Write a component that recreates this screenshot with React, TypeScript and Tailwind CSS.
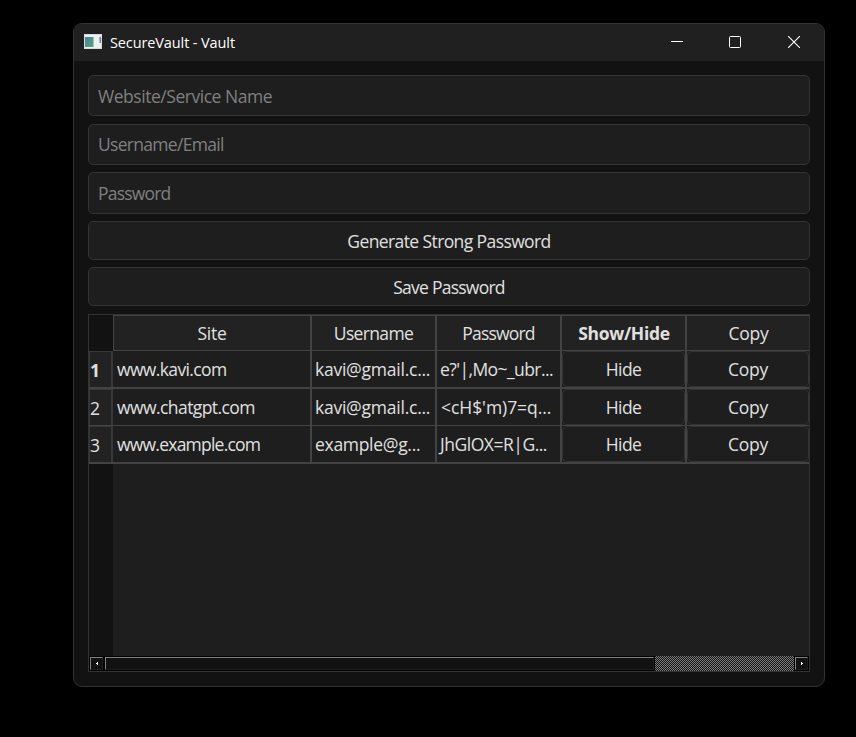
import type { ReactNode } from "react";

const rows = [
  {
    n: "1",
    site: "www.kavi.com",
    siteClass: "tracking-[-0.63px]",
    user: "kavi@gmail.c...",
    userClass: "tracking-[-0.24px]",
    pass: "e?'|,Mo~_ubr...",
    passClass: "pl-[3px] tracking-[-0.58px]",
    line: "border-b-2 h-[38px]",
  },
  {
    n: "2",
    site: "www.chatgpt.com",
    siteClass: "tracking-[-0.57px]",
    user: "kavi@gmail.c...",
    userClass: "tracking-[-0.24px]",
    pass: "<cH$'m)7=q...",
    passClass: "pl-[4px] tracking-[-0.05px]",
    line: "border-b h-[37px]",
  },
  {
    n: "3",
    site: "www.example.com",
    siteClass: "tracking-[-0.77px]",
    user: "example@g...",
    userClass: "tracking-[-0.3px]",
    pass: "JhGlOX=R|G...",
    passClass: "pl-[3px] tracking-[-0.48px]",
    line: "border-b-2 h-[38px]",
  },
];

const cols = "grid grid-cols-[197px_125px_125px_125px_124px]";

function Field({ text, className }: { text: string; className: string }) {
  return (
    <div className={`flex items-center rounded-[5px] border border-[#333] bg-[#1e1e1e] px-[9px] text-[#808080] ${className}`}>
      <span className="whitespace-pre">{text}</span>
    </div>
  );
}

function Button({ children, className }: { children: ReactNode; className: string }) {
  return (
    <div className={`flex items-center justify-center rounded-[5px] border border-[#333] bg-[#1e1e1e] ${className}`}>
      {children}
    </div>
  );
}

function HeadCell({ children, className }: { children: ReactNode; className: string }) {
  return (
    <div className={`flex items-center justify-center border-t border-b border-[#434343] bg-[#222] ${className}`}>
      <span className="whitespace-pre">{children}</span>
    </div>
  );
}

function Cell({ children, className = "" }: { children: ReactNode; className?: string }) {
  return (
    <div className={`flex overflow-hidden border-[#434343] whitespace-pre ${className}`}>
      {children}
    </div>
  );
}

function Arrow({ flip = false }: { flip?: boolean }) {
  return (
    <div className="flex h-[13px] w-[13px] items-center justify-center border border-t-[#808080] border-l-[#808080] border-r-[#1e1e1e] border-b-[#1e1e1e] bg-[#121212]">
      <svg width="3" height="3" viewBox="0 0 3 3" shapeRendering="crispEdges" className={flip ? "-scale-x-100" : "ml-px"}>
        <path d="M0 1h1v1H0zM1 0h1v3H1z" fill="#fff" />
      </svg>
    </div>
  );
}

export default function App() {
  return (
    <div className="h-[737px] w-[856px] overflow-hidden bg-black pt-[23px] pl-[73px] font-['Open_Sans','Noto_Sans',sans-serif] text-[17.5px] leading-[24px] tracking-[-0.3px] text-[#e0e0e0]">
      <div className="flex h-[664px] w-[752px] flex-col overflow-hidden rounded-[9px] border border-[#333] bg-[#121212]">
        <div className="flex h-[37px] shrink-0 items-center bg-[#202020] pb-[2px] pl-[10px] text-[14.5px] text-white">
          <svg width="18" height="15" viewBox="0 0 18 15">
            <defs>
              <linearGradient id="pane" x1="0" y1="0" x2="1" y2="1">
                <stop offset="0" stopColor="#4a7fa0" />
                <stop offset="1" stopColor="#55a878" />
              </linearGradient>
            </defs>
            <path d="M0 0h18v15H0z" fill="#d8dbde" />
            <path d="M1 1h16v13H1z" fill="#eef0f2" />
            <path d="M1 3h8.500v10H1z" fill="url(#pane)" />
            <path d="M15.500 3h1.500v6h-1.500z" fill="url(#pane)" />
          </svg>
          <span className="ml-[8px] pt-[2px] whitespace-pre tracking-[-0.11px]">SecureVault - Vault</span>
          <div className="ml-auto flex items-center gap-[47px] pr-[24px]">
            <div className="-mr-px h-px w-3 bg-white" />
            <div className="h-3 w-3 rounded-[1.5px] border border-white" />
            <svg width="12" height="12" viewBox="0 0 12 12" stroke="#fff" strokeWidth="1.1">
              <path d="M0 0l12 12M12 0L0 12" />
            </svg>
          </div>
        </div>
        <div className="flex flex-col pt-[14px] pl-[14px]">
          <div className="flex w-[722px] flex-col">
            <Field text="Website/Service Name" className="h-[41px] tracking-[-0.46px]" />
            <Field text="Username/Email" className="mt-[8px] h-[41px] pb-px tracking-[-0.7px]" />
            <Field text="Password" className="mt-[7px] h-[42px] tracking-[-0.8px]" />
            <Button className="mt-[7px] h-[39px] tracking-[-0.6px]">Generate Strong Password</Button>
            <Button className="mt-[7px] h-[39px] tracking-[-0.75px]">Save Password</Button>
            <div className="mt-[8px] flex h-[358px] flex-col border border-[#333] bg-[#1e1e1e]">
              <div className="flex h-[341px]">
                <div className="flex w-[24px] shrink-0 flex-col bg-[#121212] pt-[36px]">
                  {rows.map((r) => (
                    <div key={r.n} className={`border-[#434343] ${r.line}`}>
                      <div className={`flex h-[36px] w-[24px] items-center border-t border-r-2 border-l border-[#383838] bg-[#222] ${r.n === "1" ? "font-bold" : ""}`}>
                        {r.n}
                      </div>
                    </div>
                  ))}
                </div>
                <div className="flex flex-1 flex-col">
                  <div className={`h-[36px] ${cols}`}>
                    <HeadCell className="border-l">Site</HeadCell>
                    <HeadCell className="border-l-2 tracking-[-0.65px]">Username</HeadCell>
                    <HeadCell className="border-l-2 tracking-[-0.8px]">Password</HeadCell>
                    <HeadCell className="border-l-2 pl-px font-bold">Show/Hide</HeadCell>
                    <HeadCell className="border-l-2 pl-px">Copy</HeadCell>
                  </div>
                  {rows.map((r) => (
                    <div key={r.n} className={`border-[#434343] ${cols} ${r.line}`}>
                      <Cell className={`items-center pl-[4px] ${r.siteClass}`}>{r.site}</Cell>
                      <Cell className={`items-center border-l-2 pl-[3px] ${r.userClass}`}>{r.user}</Cell>
                      <Cell className={`items-center border-l-2 ${r.passClass}`}>{r.pass}</Cell>
                      <Cell className="border-l-2">
                        <Button className="flex-1 tracking-[-0.6px]">Hide</Button>
                      </Cell>
                      <Cell className="border-l-2">
                        <Button className="flex-1">Copy</Button>
                      </Cell>
                    </div>
                  ))}
                </div>
              </div>
              <div className="flex h-[15px] items-center bg-black px-px">
                <Arrow />
                <div className="ml-[2px] h-[13px] w-[549px] border border-t-[#808080] border-r-[#1e1e1e] border-b-[#1e1e1e] border-l-[#808080] bg-[#121212]" />
                <div className="ml-px h-[15px] flex-1 bg-[repeating-conic-gradient(#808080_0_25%,#121212_0_50%)] bg-[length:2px_2px]" />
                <div className="ml-px flex">
                  <Arrow flip />
                </div>
              </div>
            </div>
          </div>
        </div>
      </div>
    </div>
  );
}
